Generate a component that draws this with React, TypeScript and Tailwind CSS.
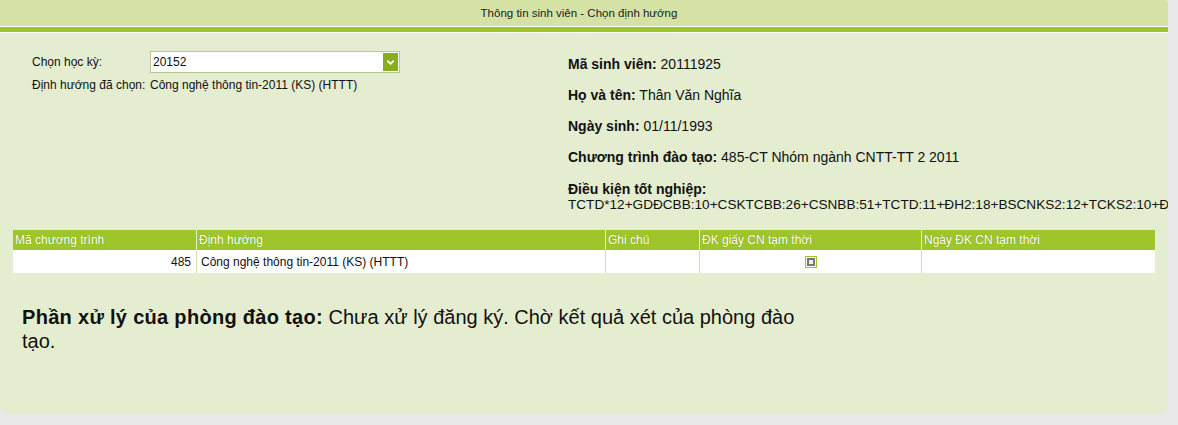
import { ChevronDown } from 'lucide-react'

const info = [
  { label: 'Mã sinh viên:', value: '20111925' },
  { label: 'Họ và tên:', value: 'Thân Văn Nghĩa' },
  { label: 'Ngày sinh:', value: '01/11/1993' },
  { label: 'Chương trình đào tạo:', value: '485-CT Nhóm ngành CNTT-TT 2 2011' },
]

const cols = [
  { title: 'Mã chương trình', w: 'w-[183px]' },
  { title: 'Định hướng', w: 'w-[409px]' },
  { title: 'Ghi chú', w: 'w-[94px]' },
  { title: 'ĐK giấy CN tạm thời', w: 'w-[222px]' },
  { title: 'Ngày ĐK CN tạm thời', w: 'flex-1' },
]

export default function App() {
  return (
    <div className="w-[1178px] h-[425px] bg-[#e9e9e9] overflow-hidden font-['Liberation_Sans',sans-serif] text-[#111]">
      <div className="w-[1168px] h-[414px] bg-[#e4edcf] rounded-tr-[4px] rounded-b-[8px] overflow-hidden flex flex-col">
        {/* header */}
        <div className="h-[26px] bg-[#d4e3a5] flex items-center justify-center text-[11.5px] text-[#222] pt-[2px] pr-[10px]">
          Thông tin sinh viên - Chọn định hướng
        </div>
        <div className="h-[1px] bg-white" />
        <div className="h-[5px] bg-[#9ec52a]" />
        <div className="h-[1px] bg-white" />

        <div className="flex h-[190px]">
          <div className="w-[568px] shrink-0 pl-[32px] pt-[18px] text-[12px]">
            <div className="flex items-center">
              <span className="w-[118px] shrink-0">Chọn học kỳ:</span>
              <div className="w-[250px] h-[22px] bg-white border border-[#b5c98a] flex items-center justify-between pl-[2px] pr-[1px]">
                <span className="text-[12px]">20152</span>
                <span className="w-[15px] h-[18px] bg-[#8aad1c] flex items-center justify-center">
                  <ChevronDown className="w-[11px] h-[11px] text-white" strokeWidth={4} />
                </span>
              </div>
            </div>
            <div className="flex mt-[3px]">
              <span className="w-[118px] shrink-0">Định hướng đã chọn:</span>
              <span>Công nghệ thông tin-2011 (KS) (HTTT)</span>
            </div>
          </div>
          <div className="flex-1 min-w-0 pt-[22px] text-[14px] whitespace-nowrap">
            {info.map((r) => (
              <div key={r.label} className="h-[31px] leading-[18px]">
                <span className="font-bold">{r.label}</span> {r.value}
              </div>
            ))}
            <div className="font-bold leading-[16px] mt-[2px]">Điều kiện tốt nghiệp:</div>
            <div className="leading-[16px] text-[13.6px]">
              TCTD*12+GDĐCBB:10+CSKTCBB:26+CSNBB:51+TCTD:11+ĐH2:18+BSCNKS2:12+TCKS2:10+ĐATN:12
            </div>
          </div>
        </div>

        {/* table */}
        <div className="ml-[13px] w-[1142px] mt-[7px] text-[12px]">
          <div className="flex h-[20px] bg-[#9ec52a] text-white [text-shadow:0_0_1px_#6b8a10]">
            {cols.map((c, i) => (
              <div
                key={c.title}
                className={`${c.w} flex items-center pl-[2px] ${i > 0 ? 'border-l border-[#e4edcf]' : ''}`}
              >
                {c.title}
              </div>
            ))}
          </div>
          <div className="flex h-[23px] bg-white">
            <div className="w-[183px] flex items-center justify-end pr-[5px]">485</div>
            <div className="w-[409px] border-l border-[#d4e3a5] flex items-center pl-[4px]">
              Công nghệ thông tin-2011 (KS) (HTTT)
            </div>
            <div className="w-[94px] border-l border-[#d4e3a5]" />
            <div className="w-[222px] border-l border-[#d4e3a5] flex items-center justify-center">
              <span className="w-[12px] h-[12px] border border-[#9ec52a] bg-white flex items-center justify-center">
                <span className="w-[8px] h-[8px] border-2 border-[#777] bg-[#eee]" />
              </span>
            </div>
            <div className="flex-1 border-l border-[#d4e3a5]" />
          </div>
        </div>

        <div className="w-[800px] ml-[22px] mt-[32px] text-[20px] leading-[24px]">
          <span className="font-bold tracking-[0.3px]">Phần xử lý của phòng đào tạo:</span> Chưa xử lý đăng ký. Chờ kết quả xét của phòng đào tạo.
        </div>
      </div>
    </div>
  )
}
